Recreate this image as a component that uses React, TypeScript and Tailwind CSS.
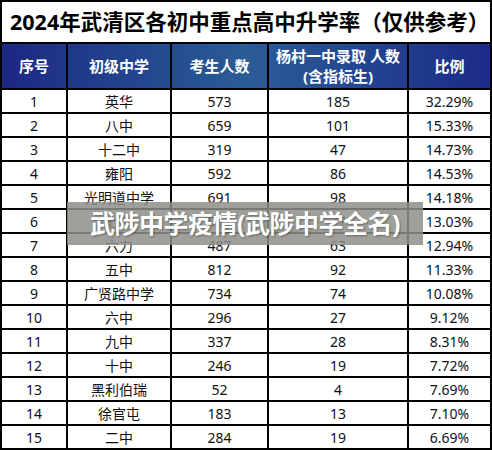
import React from 'react';

const rows: [number, string, number, number, string][] = [
  [1, '英华', 573, 185, '32.29%'],
  [2, '八中', 659, 101, '15.33%'],
  [3, '十二中', 319, 47, '14.73%'],
  [4, '雍阳', 592, 86, '14.53%'],
  [5, '光明道中学', 691, 98, '14.18%'],
  [6, '七中', 591, 77, '13.03%'],
  [7, '六力', 487, 63, '12.94%'],
  [8, '五中', 812, 92, '11.33%'],
  [9, '广贤路中学', 734, 74, '10.08%'],
  [10, '六中', 296, 27, '9.12%'],
  [11, '九中', 337, 28, '8.31%'],
  [12, '十中', 246, 19, '7.72%'],
  [13, '黑利伯瑞', 52, 4, '7.69%'],
  [14, '徐官屯', 183, 13, '7.10%'],
  [15, '二中', 284, 19, '6.69%'],
];

const cols = 'grid grid-cols-[66px_104px_97px_140px_1fr]';

export default function App() {
  return (
    <div
      className="relative w-[492px] h-[450px] bg-white border-2 border-black overflow-hidden"
      style={{ fontFamily: '"Noto Sans", "Noto Sans CJK SC", sans-serif' }}
    >
      <div className="h-[42px] border-b-2 border-black flex items-center pl-[8px]">
        <h1 className="text-[21.5px] font-bold text-black leading-normal whitespace-nowrap">
          2024年武清区各初中重点高中升学率（仅供参考）
        </h1>
      </div>

      <div className={`${cols} h-[46px] border-b-2 border-black bg-gradient-to-r from-[#1d2784] via-[#2b5c96] to-[#1d2a88] text-white font-bold text-[15px]`}>
        <div className="border-r-2 border-black flex items-center justify-center">序号</div>
        <div className="border-r-2 border-black flex items-center justify-center">初级中学</div>
        <div className="border-r-2 border-black flex items-center justify-center">考生人数</div>
        <div className="border-r-2 border-black flex flex-col items-center justify-center leading-[20px]">
          <span>杨村一中录取 人数</span>
          <span>(含指标生)</span>
        </div>
        <div className="flex items-center justify-center">比例</div>
      </div>

      {rows.map(([no, name, total, admit, pct], i) => (
        <div
          key={no}
          className={`${cols} text-[14px] text-[#111] ${i < rows.length - 1 ? 'h-[24px] border-b-2 border-black' : 'h-[22px]'}`}
        >
          <div className="border-r-2 border-black flex items-center justify-center">{no}</div>
          <div className="border-r-2 border-black flex items-center justify-center">{name}</div>
          <div className="border-r-2 border-black flex items-center justify-center">{total}</div>
          <div className="border-r-2 border-black flex items-center justify-center">{admit}</div>
          <div className="flex items-center justify-center">{pct}</div>
        </div>
      ))}

      {/* watermark band */}
      <div className="absolute left-[65px] top-[200px] w-[356px] h-[43px] bg-[#8e8e8a]/85 flex items-center justify-center">
        <span className="text-white font-bold text-[25px] leading-none tracking-[-0.5px] [text-shadow:1px_1px_2px_rgba(0,0,0,0.35)]">
          武陟中学疫情(武陟中学全名)
        </span>
      </div>
    </div>
  );
}
